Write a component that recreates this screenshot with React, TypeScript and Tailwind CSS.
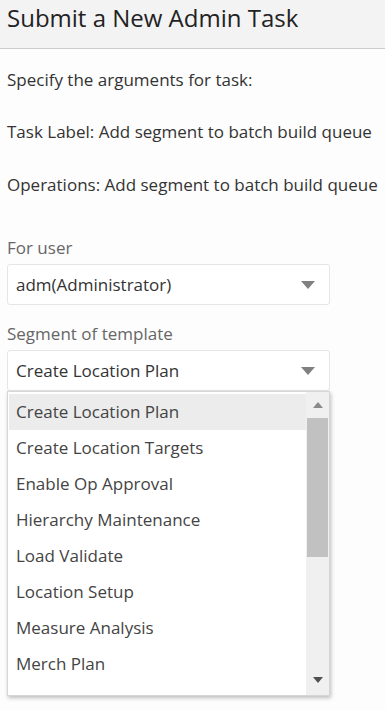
import React from "react";

const items = [
  "Create Location Plan",
  "Create Location Targets",
  "Enable Op Approval",
  "Hierarchy Maintenance",
  "Load Validate",
  "Location Setup",
  "Measure Analysis",
  "Merch Plan",
];

function Caret() {
  return (
    <svg width="14" height="8" viewBox="0 0 14 8" className="shrink-0">
      <path d="M0 0 L14 0 L7 8 Z" fill="#808080" />
    </svg>
  );
}

export default function App() {
  return (
    <div
      className="w-[385px] h-[710px] overflow-hidden bg-[#fdfdfd] text-[#333333]"
      style={{ fontFamily: "'Open Sans', sans-serif" }}
    >
      <div className="h-[49px] bg-[#f3f3f3] border-b border-[#cccccc] px-[7px] pt-[2px]">
        <h1 className="text-[24px] leading-[32px] text-[#222222]">Submit a New Admin Task</h1>
      </div>
      <div className="px-[7px]">
        <p className="mt-[19px] text-[17px] leading-[24px]">Specify the arguments for task:</p>
        <p className="mt-[28px] text-[17px] leading-[24px]">Task Label: Add segment to batch build queue</p>
        <p className="mt-[29px] text-[17px] leading-[24px]">Operations: Add segment to batch build queue</p>

        <div className="mt-[39px] text-[17px] leading-[24px] text-[#666666]">For user</div>
        <div className="mt-[4px] w-[323px] h-[41px] bg-white border border-[#e6e6e6] rounded-[3px] flex items-center justify-between pl-[8px] pr-[14px]">
          <span className="text-[17px] text-[#333333]">adm(Administrator)</span>
          <Caret />
        </div>

        <div className="mt-[17px] text-[17px] leading-[24px] text-[#666666]">Segment of template</div>
        <div className="relative mt-[4px] w-[323px]">
          <div className="h-[41px] bg-white border border-[#e6e6e6] rounded-[3px] flex items-center justify-between pl-[8px] pr-[14px]">
            <span className="text-[17px] text-[#333333]">Create Location Plan</span>
            <Caret />
          </div>
          <div className="absolute left-0 top-[41px] w-[323px] h-[305px] bg-white border border-[#d6d6d6] shadow-[1px_2px_4px_rgba(0,0,0,0.25)] flex">
            <div className="flex-1 overflow-hidden pt-[2px] pl-[1px]">
              {items.map((it, i) => (
                <div
                  key={it}
                  className={
                    "h-[36px] flex items-center pl-[7px] text-[17px] text-[#444444] " +
                    (i === 0 ? "bg-[#ececec]" : "")
                  }
                >
                  {it}
                </div>
              ))}
            </div>
            <div className="w-[23px] bg-[#f0f0f0] flex flex-col items-center">
              <div className="h-[26px] flex items-center justify-center">
                <svg width="10" height="6" viewBox="0 0 10 6">
                  <path d="M0 6 L10 6 L5 0 Z" fill="#8a8a8a" />
                </svg>
              </div>
              <div className="w-[21px] h-[139px] bg-[#c1c1c1]" />
              <div className="flex-1" />
              <div className="h-[25px] flex items-center justify-center mb-[3px]">
                <svg width="10" height="6" viewBox="0 0 10 6">
                  <path d="M0 0 L10 0 L5 6 Z" fill="#505050" />
                </svg>
              </div>
            </div>
          </div>
        </div>
      </div>
    </div>
  );
}
